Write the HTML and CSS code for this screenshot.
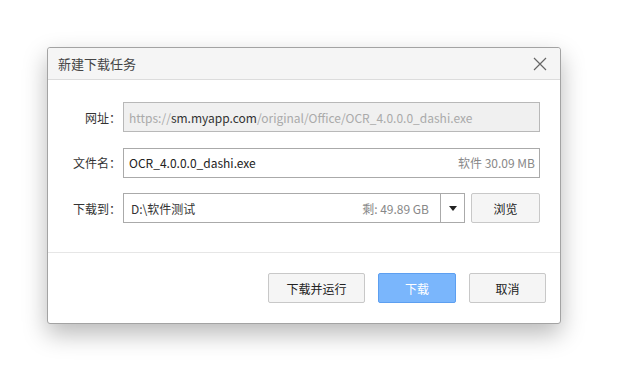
FILE: index.html
```html
<!DOCTYPE html>
<html lang="zh-CN">
<head>
	<meta charset="UTF-8">
	<title>新建下载任务</title>
	<link rel="stylesheet" href="styles.css">
</head>
<body>
	<div class="dialog">
		<div class="dialog-title">
			<span>新建下载任务</span>
			<svg class="close" width="14" height="14" viewBox="0 0 14 14">
				<path d="M1 1L13 13M13 1L1 13" stroke="#666" stroke-width="1.2" fill="none"/>
			</svg>
		</div>
		<div class="dialog-body">
			<div class="row">
				<label>网址：</label>
				<div class="field field-disabled">
					<span class="muted">https://</span><span class="dark">sm.myapp.com</span><span class="muted">/original/Office/OCR_4.0.0.0_dashi.exe</span>
				</div>
			</div>
			<div class="row">
				<label>文件名：</label>
				<div class="field">
					<span class="grow">OCR_4.0.0.0_dashi.exe</span>
					<span class="hint">软件 30.09 MB</span>
				</div>
			</div>
			<div class="row">
				<label>下载到：</label>
				<div class="field field-path">
					<span class="grow path">D:\软件测试</span>
					<span class="hint">剩: 49.89 GB</span>
					<span class="drop">
						<svg width="8" height="5" viewBox="0 0 8 5"><path d="M0 0H8L4 5Z" fill="#222"/></svg>
					</span>
				</div>
				<button class="btn btn-browse">浏览</button>
			</div>
		</div>
		<div class="dialog-foot">
			<button class="btn btn-wide">下载并运行</button>
			<button class="btn btn-primary">下载</button>
			<button class="btn">取消</button>
		</div>
	</div>
</body>
</html>
```

FILE: styles.css
```css
*{margin:0;padding:0;box-sizing:border-box}
html,body{background:#fff}
body{
	min-height:376px;
	padding:47px 0 0 47px;
	font-family:"Noto Sans CJK SC","Microsoft YaHei",sans-serif;
	font-size:12px;
	color:#333;
}
.dialog{
	width:514px;
	height:277px;
	background:#fff;
	border:1px solid #a3a3a3;
	border-radius:3px;
	box-shadow:0 10px 24px rgba(0,0,0,0.28);
	display:flex;
	flex-direction:column;
}
.dialog-title{
	height:32px;
	background:#f5f5f5;
	border-bottom:1px solid #dcdcdc;
	border-radius:3px 3px 0 0;
	display:flex;
	align-items:center;
	justify-content:space-between;
	padding:0 13px 0 10px;
	font-size:13px;
	color:#444;
}
.dialog-body{
	padding:22px 20px 0 0;
	height:173px;
	border-bottom:1px solid #e6e6e6;
}
.row{
	display:flex;
	align-items:center;
	height:30px;
	margin-bottom:15.5px;
}
.row label{
	width:75px;
	text-align:right;
	padding-right:2px;
	font-size:12px;
	color:#333;
}
.field{
	flex:1;
	height:30px;
	border:1px solid #aaa;
	display:flex;
	align-items:center;
	padding-left:5px;
	font-size:12px;
	white-space:nowrap;
	overflow:hidden;
}
.field-disabled{
	background:#f0f0f0;
	border-color:#b8b8b8;
}
.muted{color:#aaa}
.dark{color:#333}
.grow{flex:1;color:#222}
.path{padding-left:2px;color:#333}
.hint{
	color:#888;
	padding-right:4px;
}
.field-path{
	flex:none;
	width:342px;
}
.field-path .hint{padding-right:11px}
.drop{
	width:24px;
	height:100%;
	border-left:1px solid #aaa;
	display:flex;
	align-items:center;
	justify-content:center;
}
.btn{
	width:77px;
	height:30px;
	background:#f5f5f5;
	border:1px solid #c8c8c8;
	border-radius:2px;
	font-family:inherit;
	font-size:12px;
	color:#222;
}
.btn-browse{
	width:69px;
	margin-left:6px;
}
.dialog-foot{
	flex:1;
	display:flex;
	justify-content:flex-end;
	align-items:center;
	gap:13px;
	padding-right:14px;
}
.btn-wide{width:97px}
.btn-primary{
	width:78px;
	background:#7ab6fc;
	border-color:#5d9ff0;
	color:#fff;
}
```
